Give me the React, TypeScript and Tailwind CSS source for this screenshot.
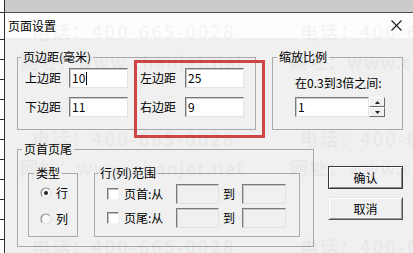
import React from 'react';

// sunken edit box, classic windows look
function Field({ className = '', value = '', caret = false, disabled = false }: { className?: string; value?: string; caret?: boolean; disabled?: boolean }) {
  return (
    <div
      className={`h-[20px] flex items-center pl-[2px] border border-t-[#7a7a7a] border-l-[#7a7a7a] border-r-[#e3e3e3] border-b-[#e3e3e3] shadow-[inset_1px_1px_0_#c8c8c8] text-[12px] leading-none text-black ${
        disabled ? 'bg-[#f0f0f0]' : 'bg-white'
      } ${className}`}
    >
      <span>{value}</span>
      {caret && <span className="ml-[1px] w-px h-[13px] bg-black" />}
    </div>
  );
}

function Radio({ checked }: { checked?: boolean }) {
  return (
    <svg width="12" height="12" viewBox="0 0 12 12">
      <circle cx="6" cy="6" r="5" fill="#f7f7f7" />
      <path d="M2.46 9.54 A5 5 0 0 1 9.54 2.46" stroke="#8a8a8a" strokeWidth="1.2" fill="none" />
      <path d="M9.54 2.46 A5 5 0 0 1 2.46 9.54" stroke="#e4e4e4" strokeWidth="1.2" fill="none" />
      {checked && <circle cx="6" cy="6" r="2" fill="#222" />}
    </svg>
  );
}

function Checkbox() {
  return (
    <div className="w-[12px] h-[12px] bg-white border border-t-[#7c7c7c] border-l-[#7c7c7c] border-r-[#f4f4f4] border-b-[#f4f4f4] shadow-[inset_1px_1px_0_#bdbdbd]" />
  );
}

function MarginRow({ l1, v1, l2, v2, caret }: { l1: string; v1: string; l2: string; v2: string; caret?: boolean }) {
  return (
    <div className="flex items-center pl-[7px]">
      <span className="w-[44px] text-[12px] leading-[14px]">{l1}</span>
      <Field className="w-[59px]" value={v1} caret={caret} />
      <span className="ml-[12px] w-[45px] text-[12px] leading-[14px]">{l2}</span>
      <Field className="w-[59px]" value={v2} />
    </div>
  );
}

const ticks = Array.from({ length: 10 });

export default function App() {
  return (
    <div className="relative w-[413px] h-[253px] overflow-hidden flex bg-white text-black font-['Noto_Sans_CJK_SC','Noto_Sans',sans-serif]">
      {/* spreadsheet edge behind the dialog */}
      <div className="w-[5px] h-full bg-white border-r border-[#2e2e2e] flex flex-col">
        <div className="h-[12px]" />
        <div className="h-px bg-[#2e2e2e]" />
        <div className="h-[26px]" />
        <div className="h-px bg-[#2e2e2e]" />
        {ticks.map((_, i) => (
          <React.Fragment key={i}>
            <div className="h-[19px]" />
            <div className="h-px bg-[#2e2e2e]" />
          </React.Fragment>
        ))}
      </div>

      <div className="flex-1 flex flex-col">
        <div className="h-[13px] bg-[#cbcbcb] border-b border-[#555]" />

        {/* Title bar */}
        <div className="h-[25px] bg-[#fdfdfd] flex items-center justify-between pl-[3px] pr-[11px]">
          <span className="text-[12px] leading-[14px]">页面设置</span>
          <svg width="11" height="11" viewBox="0 0 11 11" className="mt-[-1px]">
            <path d="M0.5 0.5 L10.5 10.5 M10.5 0.5 L0.5 10.5" stroke="#1a1a1a" strokeWidth="1.1" />
          </svg>
        </div>

        {/* Body */}
        <div className="relative flex-1 bg-[#f0f0f0] pl-[12px] pt-[12px]">
          <div className="flex items-start">
            <fieldset className="w-[239px] h-[80px] border border-[#a9a9a9]">
              <legend className="ml-[3px] px-[2px] text-[12px] leading-[14px]">页边距(毫米)</legend>
              <div className="mt-[4px] flex flex-col gap-[9px]">
                <MarginRow l1="上边距" v1="10" l2="左边距" v2="25" caret />
                <MarginRow l1="下边距" v1="11" l2="右边距" v2="9" />
              </div>
            </fieldset>

            <fieldset className="ml-[16px] w-[131px] h-[80px] border border-[#a9a9a9]">
              <legend className="ml-[4px] px-[2px] text-[12px] leading-[14px]">缩放比例</legend>
              <div className="mt-[12px] pl-[22px] text-[12px] leading-[14px]">在0.3到3倍之间:</div>
              <div className="mt-[7px] pl-[22px] flex">
                <Field className="w-[74px]" value="1" />
                <div className="w-[16px] h-[20px] flex flex-col">
                  <div className="h-[10px] flex items-center justify-center bg-[#f0f0f0] border border-t-white border-l-white border-r-[#6b6b6b] border-b-[#6b6b6b]">
                    <svg width="5" height="3" viewBox="0 0 5 3"><path d="M2.5 0 L5 3 L0 3Z" fill="#222" /></svg>
                  </div>
                  <div className="h-[10px] flex items-center justify-center bg-[#f0f0f0] border border-t-white border-l-white border-r-[#6b6b6b] border-b-[#6b6b6b]">
                    <svg width="5" height="3" viewBox="0 0 5 3"><path d="M0 0 L5 0 L2.5 3Z" fill="#222" /></svg>
                  </div>
                </div>
              </div>
            </fieldset>
          </div>

          <div className="mt-[12px] flex items-start">
            <fieldset className="w-[297px] h-[105px] border border-[#a9a9a9]">
              <legend className="ml-[4px] px-[2px] text-[12px] leading-[14px]">页首页尾</legend>
              <div className="mt-[10px] pl-[10px] flex items-start">
                <fieldset className="w-[50px] h-[71px] border border-[#a9a9a9]">
                  <legend className="ml-[5px] px-[2px] text-[12px] leading-[14px]">类型</legend>
                  <div className="mt-[6px] pl-[11px] flex flex-col gap-[12px]">
                    <label className="h-[14px] flex items-center gap-[4px] text-[12px]">
                      <Radio checked />
                      <span>行</span>
                    </label>
                    <label className="h-[14px] flex items-center gap-[4px] text-[12px]">
                      <Radio />
                      <span>列</span>
                    </label>
                  </div>
                </fieldset>

                <fieldset className="ml-[16px] w-[206px] h-[71px] border border-[#a9a9a9]">
                  <legend className="ml-[3px] px-[2px] text-[12px] leading-[14px]">行(列)范围</legend>
                  <div className="mt-[4px] pl-[12px] flex flex-col gap-[4px]">
                    {['页首:从', '页尾:从'].map((t) => (
                      <div key={t} className="h-[20px] flex items-center text-[12px]">
                        <Checkbox />
                        <span className="ml-[5px] w-[52px]">{t}</span>
                        <Field className="w-[43px]" disabled />
                        <span className="w-[23px] pl-[4px]">到</span>
                        <Field className="w-[44px]" disabled />
                      </div>
                    ))}
                  </div>
                </fieldset>
              </div>
            </fieldset>

            <div className="ml-[14px] mt-[24px] flex flex-col gap-[8px]">
              <button className="w-[75px] h-[23px] bg-[#f0f0f0] border border-[#3a3a3a] shadow-[inset_1px_1px_0_#ffffff,inset_-1px_-1px_0_#8a8a8a] text-[12px] leading-none">
                确认
              </button>
              <button className="w-[75px] h-[23px] bg-[#f0f0f0] border border-t-[#e8e8e8] border-l-[#e8e8e8] border-r-[#555] border-b-[#555] shadow-[inset_1px_1px_0_#ffffff,inset_-1px_-1px_0_#9a9a9a] text-[12px] leading-none">
                取消
              </button>
            </div>
          </div>

          {/* red annotation box */}
          <div className="absolute left-[129px] top-[22px] w-[131px] h-[78px] border-[3px] border-[#d04646]" />
        </div>
      </div>

      {/* faint watermark over the dialog */}
      <div className="absolute inset-0 pointer-events-none text-black/[0.05] text-[18px] font-bold leading-[18px] whitespace-nowrap">
        <span className="absolute left-[32px] top-[22px] tracking-[2px]">电话：400-665-0028</span>
        <span className="absolute left-[300px] top-[22px] tracking-[2px]">电话：400-665-0028</span>
        <span className="absolute left-[20px] top-[52px] tracking-[1px]">网址：www.chanjet.net</span>
        <span className="absolute left-[290px] top-[52px] tracking-[1px]">网址：www.chanjet.net</span>
        <span className="absolute left-[32px] top-[129px] tracking-[2px]">电话：400-665-0028</span>
        <span className="absolute left-[300px] top-[129px] tracking-[2px]">电话：400-665-0028</span>
        <span className="absolute left-[20px] top-[158px] tracking-[1px]">网址：www.chanjet.net</span>
        <span className="absolute left-[290px] top-[158px] tracking-[1px]">网址：www.chanjet.net</span>
        <span className="absolute left-[32px] top-[237px] tracking-[2px]">电话：400-665-0028</span>
        <span className="absolute left-[300px] top-[237px] tracking-[2px]">电话：400-665-0028</span>
      </div>
    </div>
  );
}
